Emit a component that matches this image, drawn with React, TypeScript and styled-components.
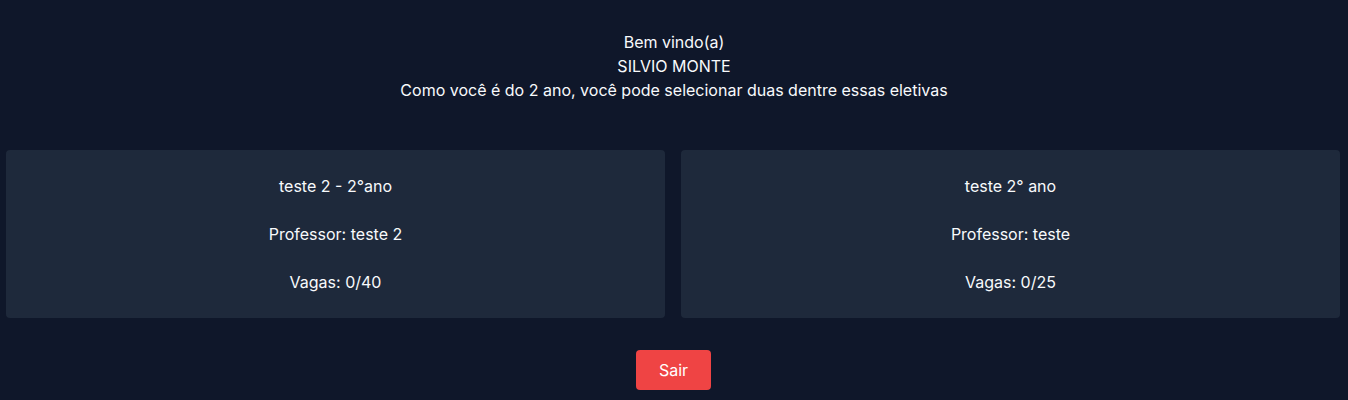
import React from "react";
import styled, { createGlobalStyle } from "styled-components";

const Global = createGlobalStyle`
  html, body { margin: 0; padding: 0; background: #0f172a; }
  body { font-family: Inter, "Noto Sans", sans-serif; color: #f1f5f9; font-size: 16px; line-height: 24px; }
`;

const Page = styled.main`
  min-height: 400px;
  background: #0f172a;
  display: flex;
  flex-direction: column;
  align-items: center;
  padding-top: 30px;
  box-sizing: border-box;
`;

const Welcome = styled.header`
  display: flex;
  flex-direction: column;
  align-items: center;
  text-align: center;
`;

const Line = styled.p`
  margin: 0;
  font-size: 16px;
  line-height: 24px;
  color: #f8fafc;
`;

const Grid = styled.section`
  margin-top: 48px;
  width: 100%;
  box-sizing: border-box;
  padding: 0 8px 0 6px;
  display: grid;
  grid-template-columns: 1fr 1fr;
  gap: 16px;
`;

const Card = styled.article`
  background: #1e293b;
  border-radius: 4px;
  padding: 24px;
  display: flex;
  flex-direction: column;
  align-items: center;
  gap: 24px;
`;

const Button = styled.button`
  margin-top: 32px;
  margin-right: 1px;
  height: 40px;
  padding: 0 23px;
  border: none;
  border-radius: 4px;
  background: #ef4444;
  color: #fff;
  font-family: Inter, "Noto Sans", sans-serif;
  font-size: 16px;
  line-height: 24px;
  cursor: pointer;
`;

const electives = [
  { name: "teste 2 - 2°ano", professor: "teste 2", vagas: "0/40" },
  { name: "teste 2° ano", professor: "teste", vagas: "0/25" },
];

export default function App() {
  return (
    <>
      <Global />
      <Page>
        <Welcome>
          <Line>Bem vindo(a)</Line>
          <Line>SILVIO MONTE</Line>
          <Line>Como você é do 2 ano, você pode selecionar duas dentre essas eletivas</Line>
        </Welcome>
        <Grid>
          {electives.map((e) => (
            <Card key={e.name}>
              <Line>{e.name}</Line>
              <Line>Professor: {e.professor}</Line>
              <Line>Vagas: {e.vagas}</Line>
            </Card>
          ))}
        </Grid>
        <Button>Sair</Button>
      </Page>
    </>
  );
}
